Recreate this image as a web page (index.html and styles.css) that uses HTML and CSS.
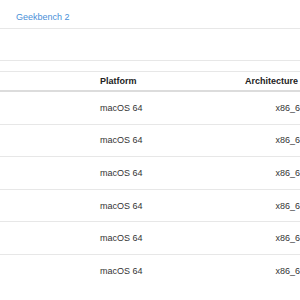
FILE: index.html
```html
<!DOCTYPE html>
<html>
<head>
<meta charset="utf-8">
<link rel="stylesheet" href="styles.css">
</head>
<body>
<nav class="nav"><a class="nav-link" href="#">Geekbench 2</a></nav>
<div class="band"></div>
<table class="results">
  <thead>
    <tr><th class="c-name"></th><th class="c-plat">Platform</th><th class="c-arch">Architecture</th></tr>
  </thead>
  <tbody>
    <tr><td></td><td>macOS 64</td><td class="arch">x86_64</td></tr>
    <tr><td></td><td>macOS 64</td><td class="arch">x86_64</td></tr>
    <tr><td></td><td>macOS 64</td><td class="arch">x86_64</td></tr>
    <tr><td></td><td>macOS 64</td><td class="arch">x86_64</td></tr>
    <tr><td></td><td>macOS 64</td><td class="arch">x86_64</td></tr>
    <tr><td></td><td>macOS 64</td><td class="arch">x86_64</td></tr>
  </tbody>
</table>
</body>
</html>
```
FILE: styles.css
```css
html, body {
  margin: 0;
  padding: 0;
  overflow: hidden;
  background: #fff;
  font-family: "Liberation Sans", Arial, sans-serif;
  font-size: 9px;
  color: #333;
}
.nav {
  height: 29px;
  border-bottom: 1px solid #e7e7e7;
  box-sizing: border-box;
  padding: 11px 0 0 16px;
  line-height: 12px;
}
.nav-link {
  color: #4a8fd8;
  text-decoration: none;
}
.band {
  height: 32px;
  border-bottom: 1px solid #e7e7e7;
  box-sizing: border-box;
  margin-bottom: 10px;
}
.results {
  width: 313px;
  border-collapse: collapse;
  border-top: 1px solid #e7e7e7;
  table-layout: fixed;
}
.results th.c-name { width: 76px; }
.results th.c-plat { width: 129px; }
.results th {
  font-weight: bold;
  text-align: left;
  padding: 3px 8px 3px 8px;
  line-height: 12px;
  height: 12px;
  color: #222;
  border-bottom: 2px solid #dcdcdc;
}
.results td {
  padding: 0 8px;
  height: 31.6px;
  line-height: 12px;
  vertical-align: middle;
  border-top: 1px solid #e7e7e7;
}
.results tbody tr:first-child td { border-top: none; }
.results td.arch { text-align: right; }
```
